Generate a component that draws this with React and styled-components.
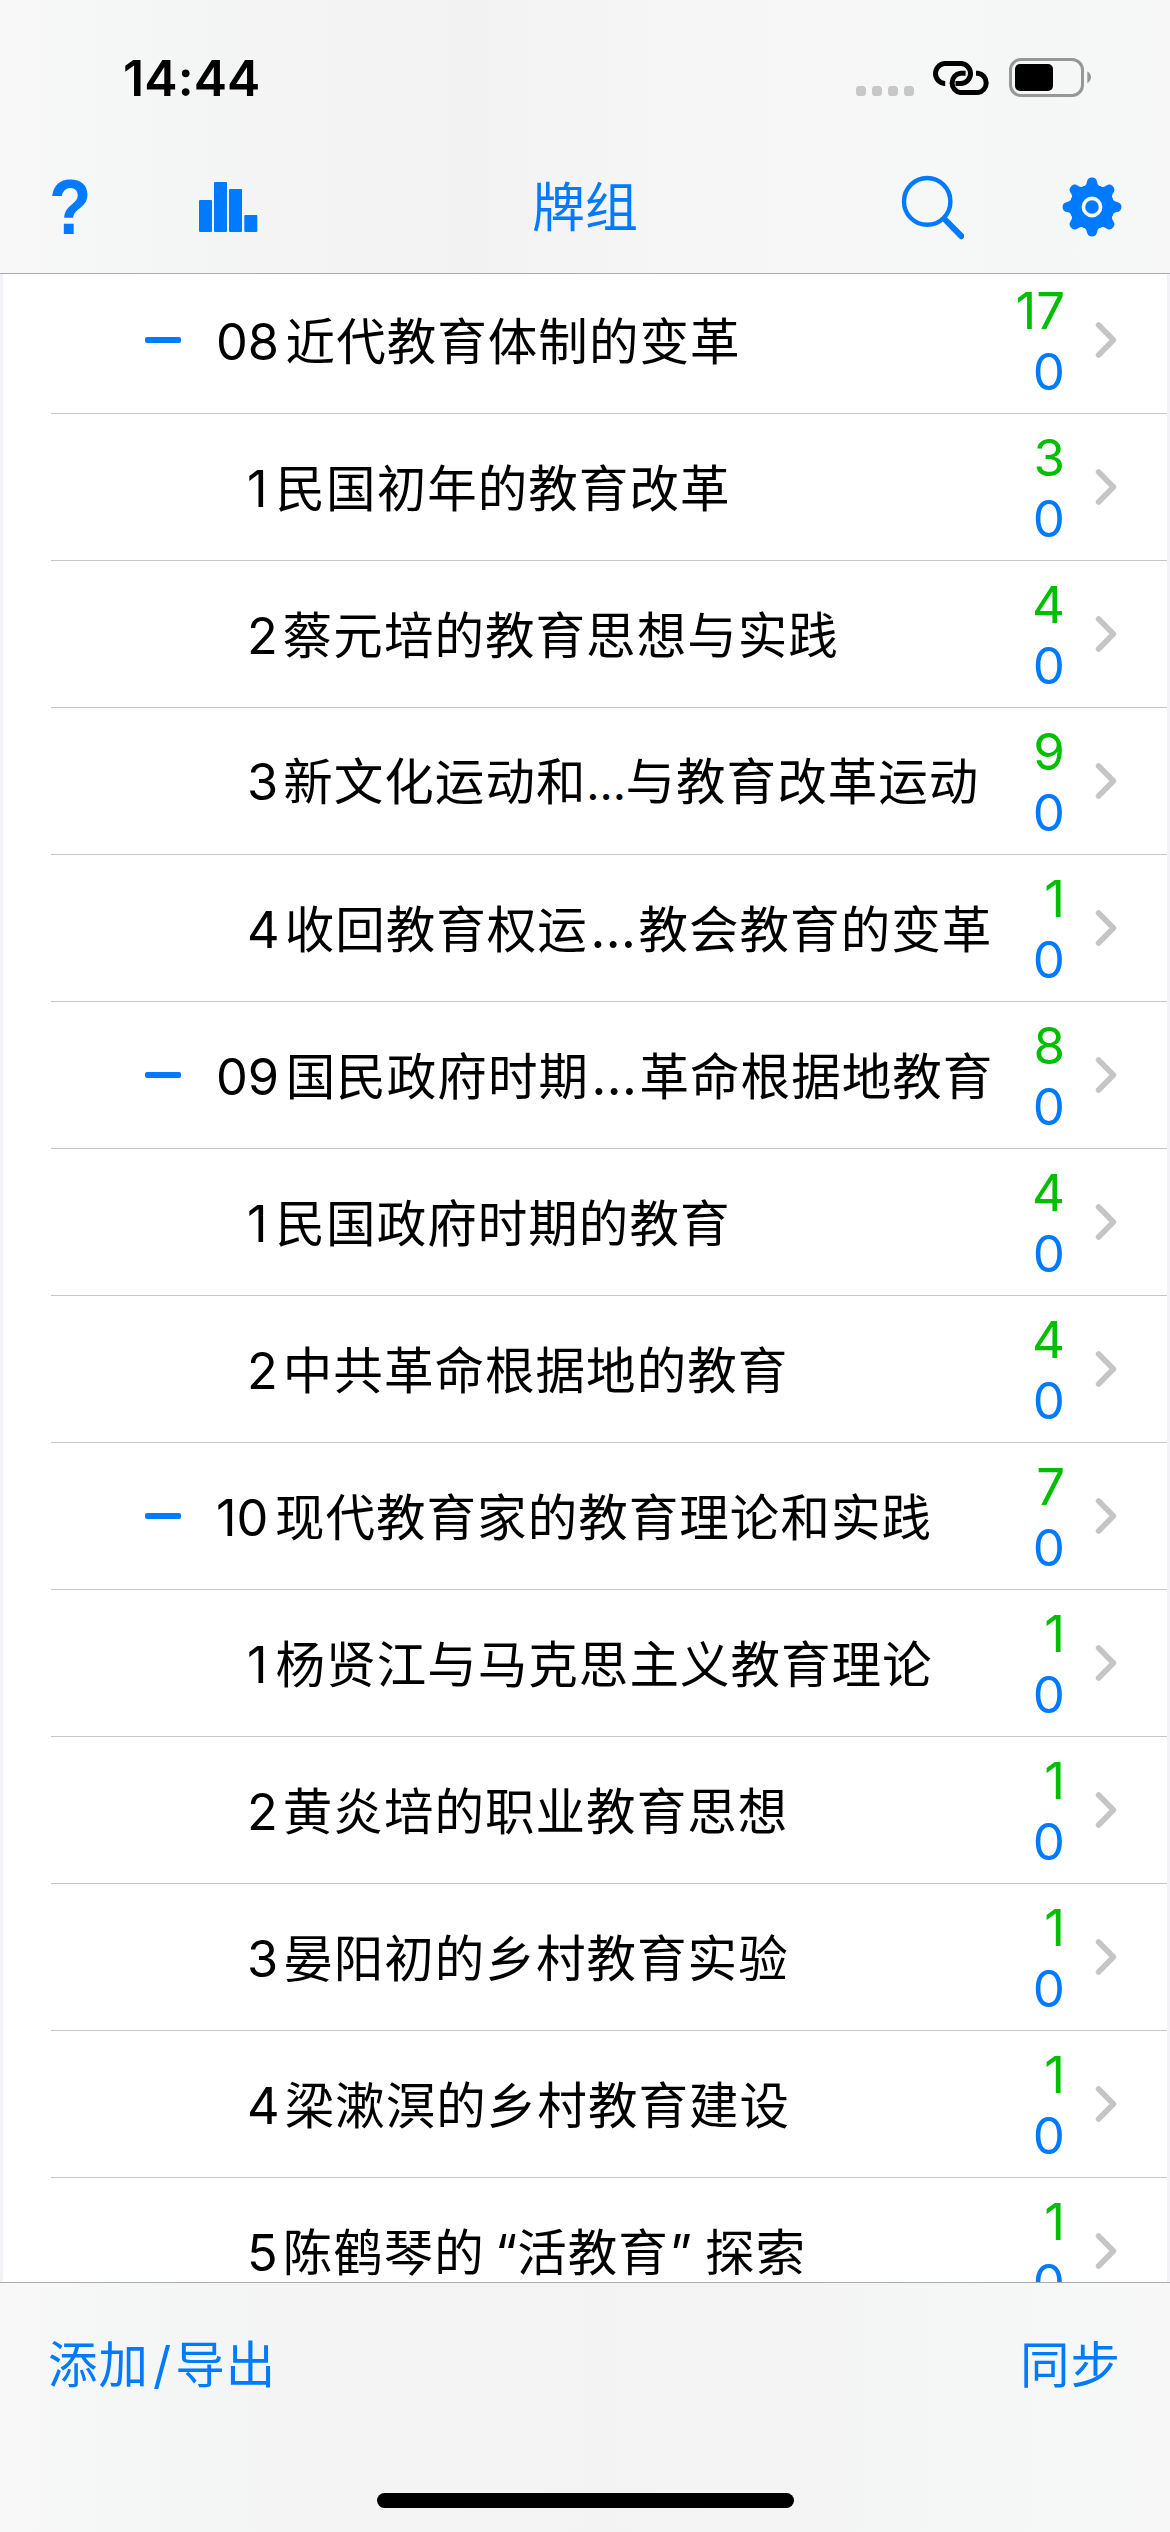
import React from "react";
import styled, { createGlobalStyle } from "styled-components";

const BLUE = "#007aff";

const GlobalStyle = createGlobalStyle`
  html, body { margin: 0; padding: 0; background: #f2f2f7; }
  * { box-sizing: border-box; }
`;

const Screen = styled.div`
  width: 1170px;
  height: 2532px;
  display: flex;
  flex-direction: column;
  overflow: hidden;
  background: #f2f2f7;
  font-family: Inter, "Noto Sans CJK SC", sans-serif;
  color: #000;
`;

const Header = styled.header`
  height: 274px;
  flex: none;
  display: flex;
  flex-direction: column;
  border-bottom: 1px solid #acacae;
  background: linear-gradient(90deg, #f8f8f8 0, #f5f6f6 130px, #f3f3f3 330px, #f2f2f2 480px, #f6f6f6 660px, #f7f7f7 850px, #f5f7f7 1040px, #f7f7f7 1170px);
`;

const StatusBar = styled.div`
  height: 141px;
  flex: none;
  display: flex;
  justify-content: space-between;
  padding: 48px 78px 0 123px;
`;

const Clock = styled.div`
  font-size: 50px;
  font-weight: 600;
  line-height: 60px;
  letter-spacing: 0.1px;
`;

const StatusIcons = styled.div`
  display: flex;
  height: 60px;
  align-items: center;
`;

const NavBar = styled.nav`
  flex: 1;
  display: grid;
  grid-template-columns: 1fr auto 1fr;
  align-items: center;
  padding: 0 48px;
`;

const NavGroup = styled.div`
  display: flex;
  align-items: center;
  justify-content: ${(p) => (p.$end ? "flex-end" : "flex-start")};
  gap: ${(p) => p.$gap}px;
`;

const NavTitle = styled.h1`
  margin: 2px 0 0;
  font-size: 53px;
  font-weight: 400;
  line-height: 70px;
  color: ${BLUE};
`;

const HelpButton = styled.button`
  all: unset;
  width: 44px;
  font-family: "Liberation Sans", sans-serif;
  font-weight: 700;
  font-size: 78px;
  line-height: 76px;
  color: ${BLUE};
  transform: scaleX(0.89);
  transform-origin: 10px 50%;
`;

const List = styled.main`
  flex: 1;
  min-height: 0;
  overflow: hidden;
  margin: 0 3px;
  background: #fff;
`;

const Rows = styled.div`
  margin-top: -7px;
`;

const Row = styled.div`
  height: 147px;
  margin-left: 48px;
  border-bottom: 1px solid #c6c6c8;
  display: flex;
  align-items: center;
  padding-right: 50px;
`;

const Toggle = styled.div`
  flex: none;
  width: ${(p) => (p.$parent ? 165 : 196)}px;
  padding-left: 94px;
`;

const Minus = styled.div`
  width: 36px;
  height: 6px;
  border-radius: 2px;
  background: ${BLUE};
`;

const Name = styled.div`
  flex: 1;
  min-width: 0;
  display: flex;
  align-items: baseline;
  white-space: nowrap;
  line-height: 72px;
`;

const Latin = styled.span`
  font-family: Inter, sans-serif;
  font-size: 50.5px;
  margin-right: ${(p) => p.$after || 0}px;
  margin-left: ${(p) => p.$before || 0}px;
`;

const Han = styled.span`
  font-family: "Noto Sans CJK SC", sans-serif;
  font-size: 49.5px;
  letter-spacing: 1.05px;
`;

const Dots = styled.span`
  width: ${(p) => (p.$tight ? 39 : 50.5)}px;
  display: flex;
  justify-content: center;
  font-size: ${(p) => (p.$tight ? 46 : 53)}px;
`;

const Counts = styled.div`
  flex: none;
  display: flex;
  flex-direction: column;
  text-align: right;
  font-size: 51px;
  line-height: 61px;
  margin: 2px 30px 0 0;
`;

const Due = styled.span`
  color: #00be00;
`;

const Fresh = styled.span`
  color: ${BLUE};
`;

const Footer = styled.footer`
  height: 250px;
  flex: none;
  display: flex;
  flex-direction: column;
  align-items: center;
  border-top: 1px solid #acacae;
  background: linear-gradient(90deg, #f8f8f8 0, #f5f6f6 130px, #f4f4f4 330px, #f3f3f3 600px, #f4f4f4 820px, #f5f7f7 980px, #f7f7f7 1170px);
`;

const Actions = styled.div`
  align-self: stretch;
  display: flex;
  justify-content: space-between;
  padding: 43px 49px 0 48px;
`;

const Action = styled.button`
  all: unset;
  display: flex;
  align-items: baseline;
  color: ${BLUE};
  line-height: 72px;
`;

const HomeBar = styled.div`
  margin-top: 92px;
  width: 417px;
  height: 15px;
  border-radius: 8px;
  background: #000;
`;

const StatusGlyphs = () => (
  <svg width="236" height="60" viewBox="856 48 236 60" fill="none">
    {[856, 872, 888, 904].map((x) => (
      <rect key={x} x={x} y="86" width="10" height="10" rx="3.6" fill="#c7c7c8" />
    ))}
    <g stroke="#000" strokeWidth="5">
      <path d="M945.2 83.5H944.5A10 10 0 0 1 944.5 63.6H961.5A10 10 0 0 1 961.5 83.5H955.5" />
      <path d="M965.6 73.2H960.5A9.8 9.8 0 0 0 960.5 92.6H977.8A9.8 9.8 0 0 0 977.8 73.2H976" />
    </g>
    <rect x="1010.5" y="59.5" width="72" height="36" rx="10.5" stroke="#969797" strokeWidth="3" />
    <rect x="1015" y="64" width="38" height="27" rx="5" fill="#000" />
    <path d="M1087.3 71.5C1089.8 72.6 1091 75 1091 77.3S1089.8 82 1087.3 83.2Z" fill="#969797" />
  </svg>
);

const BarsIcon = () => (
  <svg width="60" height="52" viewBox="198 184 60 52" fill={BLUE}>
    <rect x="199" y="203" width="13" height="32" rx="1" />
    <rect x="214" y="185" width="13" height="50" rx="1" />
    <rect x="229" y="192" width="13" height="43" rx="1" />
    <rect x="244.3" y="218" width="13" height="17" rx="1" />
  </svg>
);

const SearchIcon = () => (
  <svg width="64" height="66" viewBox="900 173 64 66" fill="none" stroke={BLUE}>
    <ellipse cx="927.2" cy="200.4" rx="23.2" ry="23.4" strokeWidth="4.4" />
    <path d="M944.5 218L961.3 235.2" strokeWidth="6" strokeLinecap="round" />
  </svg>
);

const GearIcon = () => (
  <svg width="60" height="60" viewBox="-30 -30 60 60">
    <g fill={BLUE}>
      <circle r="22.4" />
      {[0, 45, 90, 135, 180, 225, 270, 315].map((a) => (
        <path
          key={a}
          transform={`rotate(${a})`}
          d="M-11 -19.5C-7 -20.6 -5.8 -21.5 -5.1 -25C-4.5 -28.2 -2.6 -29.4 0 -29.4S4.5 -28.2 5.1 -25C5.8 -21.5 7 -20.6 11 -19.5Z"
        />
      ))}
    </g>
    <circle r="8.6" fill="none" stroke="#f5f7f7" strokeWidth="3.6" />
  </svg>
);

const Chevron = () => (
  <svg width="22" height="38" viewBox="0 0 22 38" fill="none">
    <path d="M3.6 4L18.4 19L3.6 34" stroke="#c5c5c7" strokeWidth="5.6" strokeLinecap="round" strokeLinejoin="round" />
  </svg>
);

const decks = [
  { parent: true, no: "08", text: "近代教育体制的变革", due: 17 },
  { no: "1", text: "民国初年的教育改革", due: 3 },
  { no: "2", text: "蔡元培的教育思想与实践", due: 4 },
  { no: "3", text: "新文化运动和…与教育改革运动", due: 9, tight: true },
  { no: "4", text: "收回教育权运…教会教育的变革", due: 1 },
  { parent: true, no: "09", text: "国民政府时期…革命根据地教育", due: 8 },
  { no: "1", text: "民国政府时期的教育", due: 4 },
  { no: "2", text: "中共革命根据地的教育", due: 4 },
  { parent: true, no: "10", text: "现代教育家的教育理论和实践", due: 7 },
  { no: "1", text: "杨贤江与马克思主义教育理论", due: 1 },
  { no: "2", text: "黄炎培的职业教育思想", due: 1 },
  { no: "3", text: "晏阳初的乡村教育实验", due: 1 },
  { no: "4", text: "梁漱溟的乡村教育建设", due: 1 },
  { no: "5", text: "陈鹤琴的“活教育”探索", due: 1 },
];

const numberGap = (no) => (no === "1" ? 8 : no.length === 2 ? 6.5 : 5);

const renderRun = (run, i, tight) => {
  if (run === "…") return <Dots key={i} $tight={tight}>…</Dots>;
  if (run === "“") return <Latin key={i} $before={10}>“</Latin>;
  if (run === "”") return <Latin key={i} $before={1} $after={13}>”</Latin>;
  return <Han key={i}>{run}</Han>;
};

const DeckRow = ({ deck }) => (
  <Row>
    <Toggle $parent={deck.parent}>{deck.parent && <Minus />}</Toggle>
    <Name>
      <Latin $after={numberGap(deck.no)}>{deck.no}</Latin>
      {deck.text.split(/([…“”])/).filter(Boolean).map((run, i) => renderRun(run, i, deck.tight))}
    </Name>
    <Counts>
      <Due>{deck.due}</Due>
      <Fresh>0</Fresh>
    </Counts>
    <Chevron />
  </Row>
);

export default function App() {
  return (
    <>
      <GlobalStyle />
      <Screen>
        <Header>
          <StatusBar>
            <Clock>14:44</Clock>
            <StatusIcons>
              <StatusGlyphs />
            </StatusIcons>
          </StatusBar>
          <NavBar>
            <NavGroup $gap={106}>
              <HelpButton>?</HelpButton>
              <BarsIcon />
            </NavGroup>
            <NavTitle>牌组</NavTitle>
            <NavGroup $end $gap={98}>
              <SearchIcon />
              <GearIcon />
            </NavGroup>
          </NavBar>
        </Header>
        <List>
          <Rows>
            {decks.map((deck, i) => (
              <DeckRow key={i} deck={deck} />
            ))}
          </Rows>
        </List>
        <Footer>
          <Actions>
            <Action>
              <Han>添加</Han>
              <Latin $before={4} $after={4}>/</Latin>
              <Han>导出</Han>
            </Action>
            <Action>
              <Han>同步</Han>
            </Action>
          </Actions>
          <HomeBar />
        </Footer>
      </Screen>
    </>
  );
}
